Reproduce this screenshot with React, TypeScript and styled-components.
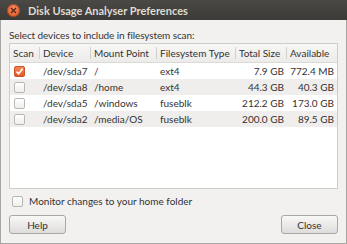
import React, { useState } from "react"
import styled, { createGlobalStyle } from "styled-components"

interface Device {
  scan: boolean
  device: string
  mount: string
  fsType: string
  total: string
  available: string
}

const devices: Device[] = [
  { scan: true, device: "/dev/sda7", mount: "/", fsType: "ext4", total: "7.9 GB", available: "772.4 MB" },
  { scan: false, device: "/dev/sda8", mount: "/home", fsType: "ext4", total: "44.3 GB", available: "40.3 GB" },
  { scan: false, device: "/dev/sda5", mount: "/windows", fsType: "fuseblk", total: "212.2 GB", available: "173.0 GB" },
  { scan: false, device: "/dev/sda2", mount: "/media/OS", fsType: "fuseblk", total: "200.0 GB", available: "89.5 GB" },
]

const GlobalStyle = createGlobalStyle`
  html, body {
    margin: 0;
    padding: 0;
    background: #f2f1f0;
  }
  body {
    font-family: Lato, "Open Sans", sans-serif;
    font-size: 10px;
    color: #333333;
  }
`

const Window = styled.div`
  width: 347px;
  height: 244px;
  box-sizing: border-box;
  display: flex;
  flex-direction: column;
  background: #f2f1f0;
  border: 1px solid #a7a6a2;
  border-top: none;
`

const TitleBar = styled.div`
  height: 20px;
  display: flex;
  align-items: center;
  gap: 8px;
  padding-left: 7px;
  background: linear-gradient(#4a4945, #3b3a36);
  color: #dfdbd2;
  font-weight: bold;
  font-size: 11px;
  margin: 0 -1px;
`

const CloseDot = styled.div`
  width: 13px;
  height: 13px;
  border-radius: 50%;
  background: radial-gradient(circle at 50% 35%, #f58b60, #df4f1c);
  box-shadow: inset 0 0 0 1px rgba(60, 30, 10, 0.35);
  display: flex;
  align-items: center;
  justify-content: center;
`

const Body = styled.div`
  flex: 1;
  display: flex;
  flex-direction: column;
  padding: 7px 8px 8px 8px;
`

const Label = styled.div`
  height: 16px;
  line-height: 16px;
  letter-spacing: -0.1px;
`

const TreeBox = styled.div`
  height: 144px;
  background: #ffffff;
  border: 1px solid #cfcdc9;
  overflow: hidden;
`

const Table = styled.table`
  width: 100%;
  table-layout: fixed;
  border-collapse: collapse;
`

const HeadCell = styled.th`
  height: 18px;
  padding: 0 3px;
  font-weight: normal;
  text-align: left;
  white-space: nowrap;
  overflow: hidden;
  background: linear-gradient(#f7f7f6, #ecebe9);
  border-bottom: 1px solid #dcdad6;
  position: relative;

  &:not(:last-child)::after {
    content: "";
    position: absolute;
    right: 0;
    top: 3px;
    bottom: 3px;
    width: 1px;
    background: #d3d1cd;
  }
`

const Row = styled.tr<{ $odd: boolean }>`
  background: ${({ $odd }): string => ($odd ? "#efeeed" : "#ffffff")};
`

const Cell = styled.td<{ $right?: boolean }>`
  height: 16px;
  padding: 0 3px;
  white-space: nowrap;
  overflow: hidden;
  text-align: ${({ $right }): string => ($right ? "right" : "left")};
`

const CheckCell = styled.td`
  height: 16px;
  padding: 0 0 0 4px;
`

const Box = styled.span<{ $checked: boolean }>`
  display: inline-flex;
  align-items: center;
  justify-content: center;
  width: 11px;
  height: 11px;
  box-sizing: border-box;
  border-radius: 2px;
  vertical-align: middle;
  border: 1px solid ${({ $checked }): string => ($checked ? "#c9542a" : "#b9b7b2")};
  background: ${({ $checked }): string =>
    $checked ? "linear-gradient(#f68659, #e35a26)" : "linear-gradient(#ffffff, #f0efee)"};
`

const Monitor = styled.label`
  display: flex;
  align-items: center;
  gap: 6px;
  margin-top: 5px;
  padding-left: 3px;
  height: 14px;
`

const Buttons = styled.div`
  display: flex;
  justify-content: space-between;
  margin-top: auto;
  padding-bottom: 1px;
`

const Button = styled.button`
  width: 57px;
  height: 19px;
  font-family: inherit;
  font-size: 10px;
  color: #333333;
  border: 1px solid #a9a8a4;
  border-radius: 3px;
  background: linear-gradient(#f8f8f7, #dedddb);
  padding: 0;
`

const Check = ({ checked }: { checked: boolean }): JSX.Element => (
  <Box $checked={checked}>
    {checked && (
      <svg width="9" height="9" viewBox="0 0 9 9">
        <path d="M1.5 4.6 L3.6 6.8 L7.6 1.8" fill="none" stroke="#fff" strokeWidth="1.6" />
      </svg>
    )}
  </Box>
)

const App = (): JSX.Element => {
  const [monitor, setMonitor] = useState(false)
  return (
    <Window>
      <GlobalStyle />
      <TitleBar>
        <CloseDot>
          <svg width="7" height="7" viewBox="0 0 7 7">
            <path d="M1 1 L6 6 M6 1 L1 6" stroke="#5a2310" strokeWidth="1.3" />
          </svg>
        </CloseDot>
        Disk Usage Analyser Preferences
      </TitleBar>
      <Body>
        <Label>Select devices to include in filesystem scan:</Label>
        <TreeBox>
          <Table>
            <colgroup>
              <col style={{ width: 30 }} />
              <col style={{ width: 51 }} />
              <col style={{ width: 66 }} />
              <col style={{ width: 79 }} />
              <col style={{ width: 51 }} />
              <col style={{ width: 50 }} />
            </colgroup>
            <thead>
              <tr>
                <HeadCell>Scan</HeadCell>
                <HeadCell>Device</HeadCell>
                <HeadCell>Mount Point</HeadCell>
                <HeadCell>Filesystem Type</HeadCell>
                <HeadCell>Total Size</HeadCell>
                <HeadCell>Available</HeadCell>
              </tr>
            </thead>
            <tbody>
              {devices.map(
                (d, i): JSX.Element => (
                  <Row key={d.device} $odd={i % 2 === 1}>
                    <CheckCell>
                      <Check checked={d.scan} />
                    </CheckCell>
                    <Cell>{d.device}</Cell>
                    <Cell>{d.mount}</Cell>
                    <Cell>{d.fsType}</Cell>
                    <Cell $right>{d.total}</Cell>
                    <Cell $right>{d.available}</Cell>
                  </Row>
                )
              )}
            </tbody>
          </Table>
        </TreeBox>
        <Monitor onClick={(): void => setMonitor(!monitor)}>
          <Check checked={monitor} />
          Monitor changes to your home folder
        </Monitor>
        <Buttons>
          <Button>Help</Button>
          <Button>Close</Button>
        </Buttons>
      </Body>
    </Window>
  )
}

export default App
